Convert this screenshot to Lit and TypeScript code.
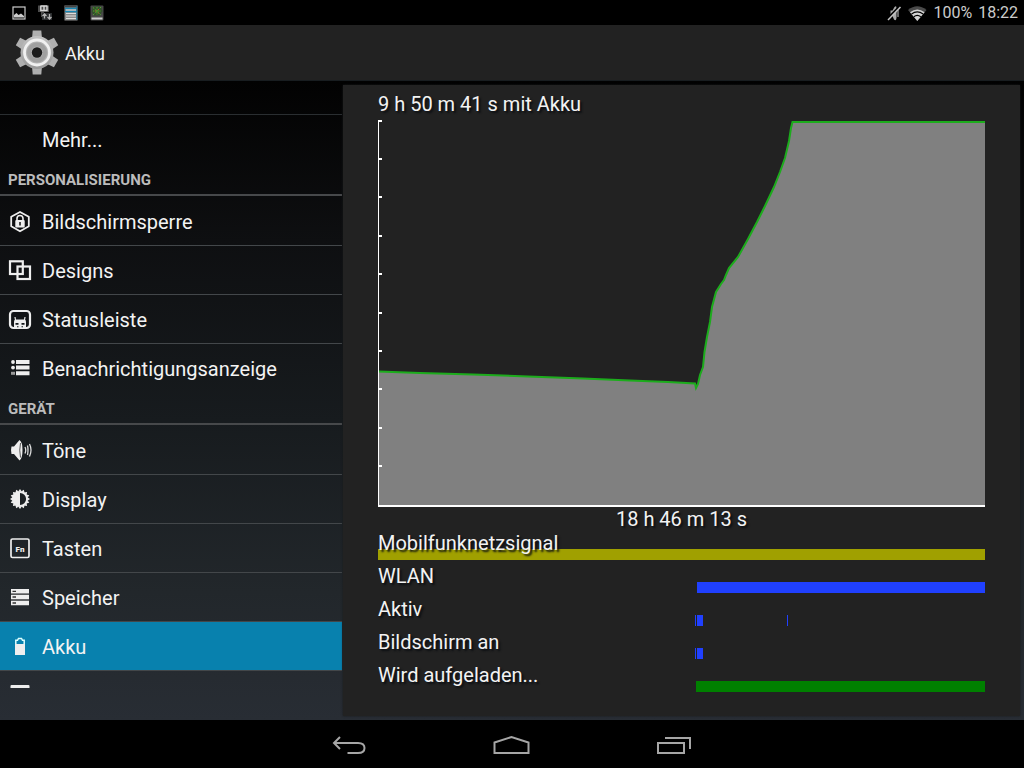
import { LitElement, html, svg, css, TemplateResult } from "lit";
import { customElement, property } from "lit/decorators.js";

type Span = [number, number];

interface Entry {
  label: string;
  icon: keyof typeof icons;
  selected?: boolean;
}

interface Section {
  title?: string;
  entries: Entry[];
}

// Width of the recorded time span, in chart units.
const SPAN = 607;

const teeth = Array.from({ length: 16 }, (_, i) => i * 22.5);

const icons = {
  none: svg``,
  lock: svg`
    <path d="M12 3 L20.800 7.800 V17.300 L12 22.300 L3.200 17.300 V7.800 Z" fill="none" stroke="#eee" stroke-width="1.800" stroke-linejoin="round"/>
    <path d="M9 11.500 V9.500 a3 3 0 0 1 6 0 V11.500" fill="none" stroke="#eee" stroke-width="1.600"/>
    <rect x="7.300" y="11" width="9.400" height="7.500" rx="1" fill="#eee"/>
    <path d="M12 13 v3.500" stroke="#111" stroke-width="1.500"/>`,
  designs: svg`
    <rect x="2" y="3.300" width="12.800" height="12.700" fill="none" stroke="#eee" stroke-width="2.200"/>
    <rect x="9.500" y="8.500" width="12.500" height="12.500" fill="none" stroke="#eee" stroke-width="2.200"/>`,
  status: svg`
    <rect x="2" y="4" width="20" height="17" rx="3.500" fill="none" stroke="#eee" stroke-width="2.200"/>
    <path d="M7.500 13 L7 10 M16.500 13 L17 10" fill="none" stroke="#eee" stroke-width="1.200"/>
    <path d="M6 21 V14.500 Q6 12.500 8 12.500 H16 Q18 12.500 18 14.500 V21 Z" fill="#eee"/>
    <path d="M7.500 16 h3 v1.800 h-3z M13.500 16 h3 v1.800 h-3z M9 19.300 h1.500 v1 h-1.500z M13.500 19.300 h1.500 v1 h-1.500z" fill="#15181b"/>`,
  list: svg`
    <path d="M8 4 h13.500 v4 h-13.500z M8 9.600 h13.500 v4 h-13.500z M8 15.200 h13.500 v4 h-13.500z" fill="#eee"/>
    <circle cx="5" cy="6" r="1.900" fill="#eee"/><circle cx="5" cy="11.600" r="1.900" fill="#eee"/>
    <rect x="3" y="15.800" width="4" height="3" fill="#999"/>`,
  sound: svg`
    <path d="M3.500 8.500 H6 L11.500 2 Q14.500 4 14.500 12 Q14.500 20.500 11.500 22.500 L6 16 H3.500 Q2.500 12 3.500 8.500 Z" fill="#eee"/>
    <path d="M12.500 5 Q11 12 12.500 19.500" fill="none" stroke="#555" stroke-width="1"/>
    <path d="M17 9 Q18.500 12 17 15.500 M19.500 7.500 Q20.500 12 19.500 17 M21.500 6 Q24.500 12 21.500 18.500" fill="none" stroke="#ddd" stroke-width="1.300"/>`,
  display: svg`
    ${teeth.map((a) => svg`<path d="M10.200 4.500 L12 2 L13.800 4.500 Z" fill="#eee" transform="rotate(${a} 12 12)"/>`)}
    <circle cx="12" cy="12" r="7.100" fill="none" stroke="#eee" stroke-width="2"/>
    <path d="M12 5 a7 7 0 0 0 0 14 Z" fill="#eee"/>`,
  keys: svg`
    <rect x="3" y="3" width="18" height="18.500" rx="1.500" fill="none" stroke="#eee" stroke-width="1.700"/>
    <text x="12" y="15.500" text-anchor="middle" font-family="Roboto, sans-serif" font-size="8" font-weight="900" fill="#eee">Fn</text>`,
  storage: svg`
    <path d="M3 4 h18 v4.500 h-18z M3 10 h18 v4.300 h-18z M3 15.800 h18 v4.400 h-18z" fill="#eee"/>
    <path d="M4.500 6.300 h3.500 M4.500 12 h3.500 M4.500 18 h3.500" stroke="#333" stroke-width="1.300"/>
    <path d="M3 9.300 h18 M3 15 h18" stroke="#777" stroke-width="0.800"/>`,
  battery: svg`
    <path d="M7.800 10 V6.300 H9.500 L10.500 4.500 H13.500 L14.500 6.300 H16.200 V10" fill="none" stroke="#dff" stroke-width="1.500"/>
    <rect x="7" y="10" width="10" height="11" fill="#eee"/>`,
  apps: svg`<rect x="2.500" y="2" width="19" height="20" rx="1" fill="#eee"/>`,
};

const sections: Section[] = [
  { entries: [{ label: "Mehr...", icon: "none" }] },
  {
    title: "Personalisierung",
    entries: [
      { label: "Bildschirmsperre", icon: "lock" },
      { label: "Designs", icon: "designs" },
      { label: "Statusleiste", icon: "status" },
      { label: "Benachrichtigungsanzeige", icon: "list" },
    ],
  },
  {
    title: "Gerät",
    entries: [
      { label: "Töne", icon: "sound" },
      { label: "Display", icon: "display" },
      { label: "Tasten", icon: "keys" },
      { label: "Speicher", icon: "storage" },
      { label: "Akku", icon: "battery", selected: true },
      { label: "", icon: "apps" },
    ],
  },
];

const timelines: { label: string; color: string; spans: Span[] }[] = [
  { label: "Mobilfunknetzsignal", color: "#a0a000", spans: [[0, 607]] },
  { label: "WLAN", color: "#2040ff", spans: [[319, 607]] },
  { label: "Aktiv", color: "#2040ff", spans: [[317, 318], [319, 325], [409, 410]] },
  { label: "Bildschirm an", color: "#2040ff", spans: [[317, 318], [319, 325]] },
  { label: "Wird aufgeladen...", color: "#008000", spans: [[318, 607]] },
];

@customElement("status-bar")
export class StatusBar extends LitElement {
  static styles = css`
    :host {
      display: flex;
      align-items: center;
      justify-content: space-between;
      height: 25px;
      padding: 0 6px 0 12px;
      background: #000;
      color: #ccc;
      font-size: 16px;
      line-height: 20px;
    }
    .group { display: flex; align-items: center; gap: 12px; }
    .right { gap: 6px; }
    svg { display: block; }
  `;
  render() {
    return html`
      <div class="group">
        <svg width="14" height="16" viewBox="0 0 14 16" aria-hidden="true">
          <rect x="1" y="2" width="12" height="12" fill="none" stroke="#ccc" stroke-width="1.2"/>
          <path d="M2 12.500 V10 L4.500 8 L6.500 10 L9 8.500 L12 11 V12.500 Z" fill="#ccc"/>
        </svg>
        <svg width="14" height="16" viewBox="0 0 14 16" aria-hidden="true">
          <path d="M0 0.500 H11 V7 H6 V12 H3 V7 H0 Z" fill="#4c4c4c"/>
          <path d="M2.800 0.500 V5.500 H9 V0.500 M3 1 H9 M6 1 V5" fill="none" stroke="#d8d8d8" stroke-width="1.400"/>
          <path d="M4 8 H14 V15 H4 Z" fill="#2c2e30"/>
          <path d="M6.500 13.500 V9.500 M4.500 11 L6.500 9 L8.500 11 M11.500 9 V13.500 M9.500 12 L11.500 14 L13.500 12" fill="none" stroke="#b4b4b4" stroke-width="1.300"/>
        </svg>
        <svg width="14" height="16" viewBox="0 0 14 16" aria-hidden="true">
          <rect x="0.500" y="0.500" width="13" height="15" fill="#8c8c8c"/>
          <rect x="0.500" y="0.500" width="13" height="2" fill="#444"/>
          <path d="M1 3.500 H13 M1 6.500 H13" stroke="#1686b4" stroke-width="1.300"/>
          <path d="M2 5 H12 M2 8.500 H12 M2 11 H12 M2 13.500 H12" stroke="#ddd"/>
          <path d="M12.800 1 V15" stroke="#1b6f93"/>
        </svg>
        <svg width="14" height="16" viewBox="0 0 14 16" aria-hidden="true">
          <rect x="0.500" y="0.500" width="13" height="15" rx="1" fill="#484848"/>
          <path d="M3 1.500 H11 L12.500 6 L10 10.500 H4 L1.500 7 Z" fill="#33502c"/>
          <path d="M3 2.500 L11 10 M11 2 L3 10 M7 2 V10 M3 6 H11" stroke="#55a42e" stroke-dasharray="1.500 1"/>
          <path d="M5 6 H6 M8 4.500 H9 M8 8 H9" stroke="#b4502c"/>
          <rect x="1.500" y="12.500" width="11" height="2" fill="#ccc"/>
        </svg>
      </div>
      <div class="group right">
        <svg width="40" height="18" viewBox="1 0 40 18" aria-hidden="true">
          <path d="M4.500 6.500 H6.500 L8.500 3 Q10.500 1 10.500 4 V14 Q10 17.500 8 15.500 L6.500 12 H4.500 Z" fill="#aaa"/>
          <path d="M12 6 V13" stroke="#888" stroke-width="1.500"/>
          <path d="M1 15 L14 2" stroke="#000" stroke-width="2"/>
          <path d="M2 16 L14.500 3" stroke="#c4c4c4" stroke-width="1.500"/>
          <path d="M22 6 Q31.300 -1.500 40.500 6 L31.300 17 Z" fill="#4a4a4a"/>
          <path d="M24 8.300 Q31.300 2.500 38.600 8.300 L31.300 17 Z" fill="#d4d4d4"/>
          <path d="M25.500 10 Q31.300 5.700 37.100 10 M27.800 12.800 Q31.300 10 34.800 12.800" fill="none" stroke="#000" stroke-width="1.100"/>
        </svg>
        <span>100%</span>
        <time>18:22</time>
      </div>
    `;
  }
}

@customElement("title-bar")
export class TitleBar extends LitElement {
  static styles = css`
    :host {
      display: flex;
      align-items: center;
      gap: 6px;
      height: 55px;
      padding-left: 14px;
      background: #222;
      border-bottom: 1px solid #181d20;
      box-sizing: content-box;
    }
    svg { display: block; }
    h1 { margin: 0; padding-top: 2px; font-size: 18px; line-height: 24px; font-weight: 400; color: #f3f3f3; }
  `;
  render() {
    return html`
      <svg width="45" height="46" viewBox="0 0 45 46" aria-hidden="true">
        <defs>
          <linearGradient id="metal" x1="0" y1="0" x2="0" y2="1">
            <stop offset="0" stop-color="#c2c2c2"/><stop offset="1" stop-color="#989898"/>
          </linearGradient>
        </defs>
        <g fill="#b0b0b0">
          ${[0, 60, 120, 180, 240, 300].map(
            (a) => svg`<path d="M18.700 0.500 H27.300 L28 9 H18 Z" transform="rotate(${a} 23 22.500)"/>`
          )}
        </g>
        <circle cx="23" cy="22.500" r="16.500" fill="url(#metal)"/>
        <circle cx="23" cy="22.500" r="12.500" fill="#b2b2b2" stroke="#f0f0f0" stroke-width="2.800"/>
        <circle cx="23" cy="22.500" r="8" fill="none" stroke="#a0a0a0" stroke-width="4"/>
        <circle cx="23" cy="22.500" r="5.200" fill="#1c1c1c"/>
      </svg>
      <h1>Akku</h1>
    `;
  }
}

@customElement("settings-list")
export class SettingsList extends LitElement {
  static styles = css`
    :host { display: block; overflow: hidden; margin-bottom: 32px; }
    ul { margin: 0; padding: 0; list-style: none; }
    li + li { border-top: 1px solid #43474a; }
    .previous { height: 33px; border-bottom: 1px solid #2a2e31; }
    h2 {
      display: flex;
      align-items: center;
      box-sizing: border-box;
      height: 33px;
      margin: 0 0 1px;
      padding: 2px 8px 0;
      border-bottom: 2px solid #47494b;
      font-size: 15px;
      line-height: 20px;
      font-weight: 700;
      text-transform: uppercase;
      color: #bcbcbc;
    }
    a {
      display: flex;
      align-items: center;
      gap: 10px;
      height: 48px;
      padding: 0 8px;
      color: #f3f3f3;
      font-size: 20px;
      line-height: 24px;
      text-decoration: none;
      white-space: nowrap;
    }
    a span { padding-top: 2px; }
    .selected { background: #0881ae; }
    svg { flex: none; display: block; }
  `;
  render() {
    return html`
      <nav aria-label="Einstellungen">
        <div class="previous"></div>
        ${sections.map(
          (s) => html`
            ${s.title ? html`<h2>${s.title}</h2>` : null}
            <ul>
              ${s.entries.map(
                (e) => html`<li>
                  <a href="#" class=${e.selected ? "selected" : ""}>
                    <svg width="24" height="24" viewBox="0 0 24 24" aria-hidden="true">${icons[e.icon]}</svg>
                    <span>${e.label}</span>
                  </a>
                </li>`
              )}
            </ul>
          `
        )}
      </nav>
    `;
  }
}

@customElement("timeline-row")
export class TimelineRow extends LitElement {
  @property() label = "";
  @property() color = "";
  @property({ attribute: false }) spans: Span[] = [];

  static styles = css`
    :host { display: grid; height: 33px; }
    .label, svg { grid-area: 1 / 1; }
    .label { z-index: 1; line-height: 24px; }
    svg { display: block; align-self: end; width: 100%; height: 11px; margin-bottom: 4px; }
  `;
  render() {
    return html`
      <span class="label">${this.label}</span>
      <svg viewBox="0 0 ${SPAN} 11" preserveAspectRatio="none" shape-rendering="crispEdges" aria-hidden="true">
        ${this.spans.map(
          ([from, to]) => svg`<rect x=${from} y="0" width=${to - from} height="11" fill=${this.color}/>`
        )}
      </svg>
    `;
  }
}

@customElement("battery-panel")
export class BatteryPanel extends LitElement {
  static styles = css`
    :host {
      display: flex;
      flex-direction: column;
      min-width: 0;
      margin: 4px 4px 4px 1px;
      padding: 7px 35px 20px;
      background: #222;
      box-shadow: 0 0 2px #16191b;
      color: #f3f3f3;
      font-size: 20px;
      line-height: 24px;
      text-shadow: 2px 2px 2px #0b0e12;
    }
    h2 { margin: 0 0 4px; font-size: 20px; line-height: 24px; font-weight: 400; }
    .chart { display: block; flex: 1; min-height: 0; width: 100%; }
    .caption { margin: 0; text-align: center; }
  `;
  render(): TemplateResult {
    const curve =
      "M0.500 250.500 L42 252 L95 253.500 L150 255.500 L205 257.500 L252 259.500 L290 261 L317 262.500 L318 267" +
      " L320 263 L322 254 L325 246 L326.500 231 L329 216 L332 201 L334 186 L338 171 L343 163 L346 159 L348 154" +
      " L351 147 L360 136 L370 118 L379 101 L387 85 L396 66 L402 51 L407 37 L411 20 L413 7 L414.500 1 H607";
    return html`
      <h2>9 h 50 m 41 s mit Akku</h2>
      <svg class="chart" viewBox="0 0 607 387" preserveAspectRatio="none" role="img" aria-label="Ladezustand">
        <g transform="translate(0 1)">
          <path d="${curve} V385 H0.500 Z" fill="#808080"/>
          <path d=${curve} fill="none" stroke="#1cac1c" stroke-width="2"/>
        </g>
        <g fill="#fff" shape-rendering="crispEdges">
          <rect x="0" y="0" width="1" height="387"/>
          <rect x="0" y="385" width="607" height="2"/>
          ${Array.from(
            { length: 10 },
            (_, i) => svg`<rect x="0" y=${Math.floor(i * 38.4)} width="4" height="2"/>`
          )}
        </g>
      </svg>
      <p class="caption">18 h 46 m 13 s</p>
      ${timelines.map(
        (t) => html`<timeline-row .label=${t.label} .color=${t.color} .spans=${t.spans}></timeline-row>`
      )}
    `;
  }
}

@customElement("navigation-bar")
export class NavigationBar extends LitElement {
  static styles = css`
    :host { display: flex; justify-content: center; height: 48px; background: #000; }
    button {
      display: grid;
      place-items: center;
      width: 162px;
      padding: 0;
      border: 0;
      background: none;
    }
    svg { display: block; fill: none; stroke: #a6a6a6; stroke-width: 2; }
  `;
  render() {
    return html`
      <button aria-label="Zurück">
        <svg width="40" height="24" viewBox="0 0 40 24">
          <path d="M10 5 L4 11 L10 17 M4.500 11 H28 Q34.500 11 34.500 16 Q34.500 21 28 21 H17.500"/>
        </svg>
      </button>
      <button aria-label="Startseite">
        <svg width="40" height="24" viewBox="0 0 40 24">
          <path d="M2.500 10.500 L19.500 5 L36.500 10.500 V21 H2.500 Z"/>
        </svg>
      </button>
      <button aria-label="Letzte Apps">
        <svg width="40" height="24" viewBox="0 0 40 24">
          <path d="M4 11 H30 V21 H4 Z M11 6 H36 V17"/>
        </svg>
      </button>
    `;
  }
}

@customElement("app-root")
export class AppRoot extends LitElement {
  static styles = css`
    :host {
      display: flex;
      flex-direction: column;
      height: 100vh;
      font-family: Roboto, sans-serif;
      background: #000;
    }
    main {
      flex: 1;
      min-height: 0;
      display: grid;
      grid-template-columns: 342px minmax(0, 1fr);
      grid-template-rows: minmax(0, 1fr);
      background: linear-gradient(#020202, #0e0f11 25%, #171b1e 53%, #22272b 80%, #282d34);
    }
  `;
  render() {
    return html`
      <status-bar></status-bar>
      <title-bar></title-bar>
      <main>
        <settings-list></settings-list>
        <battery-panel></battery-panel>
      </main>
      <navigation-bar></navigation-bar>
    `;
  }
}
